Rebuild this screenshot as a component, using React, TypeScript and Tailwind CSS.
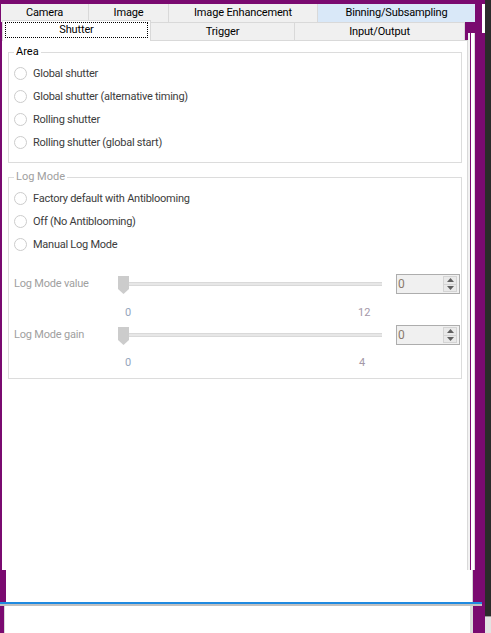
import React from "react";

function Radio({ label }: { label: string }) {
  return (
    <div className="flex items-center h-[23px]">
      <span className="w-[13px] h-[13px] rounded-full border border-[#cccccc] bg-white shrink-0" />
      <span className="ml-[6px] text-[#3c3c3c] tracking-[-0.25px]">{label}</span>
    </div>
  );
}

function Slider() {
  return (
    <div className="relative w-[264px] h-[20px] flex items-center pl-[4px]">
      <div className="w-full h-[4px] bg-[#e7e7e7] border-y border-[#d9d9d9]" />
      <svg width="11" height="18" viewBox="0 0 11 18" className="absolute left-0 top-[2px]">
        <path d="M0 0H11V13L5.5 18L0 13Z" fill="#cccccc" />
      </svg>
    </div>
  );
}

function Spinner() {
  return (
    <div className="w-[64px] h-[20px] border border-[#adadad] bg-[#f0f0f0] flex items-center pl-[1px] pr-[2px]">
      <span className="flex-1 text-[12px] leading-none text-[#8a7a6c]">0</span>
      <div className="w-[14px] h-[16px] flex flex-col">
        <div className="flex-1 border border-[#d4d4d4] bg-[#e9e9e9] flex items-center justify-center">
          <svg width="7" height="4" viewBox="0 0 7 4">
            <path d="M0 4L3.5 0L7 4Z" fill="#606060" />
          </svg>
        </div>
        <div className="flex-1 border border-t-0 border-[#d4d4d4] bg-[#e9e9e9] flex items-center justify-center">
          <svg width="7" height="4" viewBox="0 0 7 4">
            <path d="M0 0L3.5 4L7 0Z" fill="#606060" />
          </svg>
        </div>
      </div>
    </div>
  );
}

function SliderRow({ label }: { label: string }) {
  return (
    <div className="flex items-center h-[20px]">
      <span className="w-[104px] text-[#a0a0a0] tracking-[-0.2px]">{label}</span>
      <Slider />
      <div className="ml-[14px]">
        <Spinner />
      </div>
    </div>
  );
}

export default function App() {
  return (
    <div className="w-[491px] h-[633px] bg-[#7a0a70] flex overflow-hidden relative font-['Roboto',sans-serif] text-[11px] leading-[14px]">
      <div className="w-[485px] flex flex-col">
        <div className="h-[4px]" />
        {/* Tab row 1 */}
        <div className="flex h-[18px] ml-[1px] text-black tracking-[-0.15px]">
          <div className="w-[88px] bg-[#f0f0f0] border-r border-[#d9d9d9] flex items-center justify-center">Camera</div>
          <div className="w-[80px] bg-[#f0f0f0] border-r border-[#d9d9d9] flex items-center justify-center">Image</div>
          <div className="w-[149px] bg-[#f0f0f0] border-r border-[#d9d9d9] flex items-center justify-center">Image Enhancement</div>
          <div className="w-[157px] bg-[#d9e8f8] flex items-center justify-center">Binning/Subsampling</div>
        </div>
        <div className="flex h-[548px]">
          <div className="ml-[2px] w-[466px] flex flex-col">
            {/* Tab row 2 */}
            <div className="flex h-[18px] items-end text-black tracking-[-0.15px]">
              <div className="relative z-10 w-[149px] h-[21px] -mb-px bg-white border-x border-t border-[#d9d9d9] flex flex-col px-[2px] pt-[1px] pb-[3px]">
                <div className="flex-1 border border-dotted border-black flex items-center justify-center">Shutter</div>
              </div>
              <div className="w-[144px] h-[18px] bg-[#f0f0f0] border-t border-r border-[#d9d9d9] flex items-center justify-center">Trigger</div>
              <div className="w-[170px] h-[18px] bg-[#f0f0f0] border-t border-r border-[#d9d9d9] flex items-center justify-center">Input/Output</div>
            </div>
            {/* Page */}
            <div className="h-[530px] bg-white border-t border-r border-[#d9d9d9] px-[6px]">
              <fieldset className="mt-[4px] w-[454px] border border-[#dcdcdc] pl-[5px] pt-[3px] pb-[8px]">
                <legend className="px-[2px] leading-[14px] text-black">Area</legend>
                <Radio label="Global shutter" />
                <Radio label="Global shutter (alternative timing)" />
                <Radio label="Rolling shutter" />
                <Radio label="Rolling shutter (global start)" />
              </fieldset>
              <fieldset className="mt-[7px] w-[454px] border border-[#dcdcdc] pl-[5px] pt-[3px] pb-[8px]">
                <legend className="px-[2px] leading-[14px] text-[#a0a0a0]">Log Mode</legend>
                <Radio label="Factory default with Antiblooming" />
                <Radio label="Off (No Antiblooming)" />
                <Radio label="Manual Log Mode" />
                <div className="mt-[18px]">
                  <SliderRow label="Log Mode value" />
                </div>
                <div className="mt-[12px] h-[14px] flex pl-[111px]">
                  <span className="w-[233px] text-[#95a5bd]">0</span>
                  <span className="text-[#a498a8]">12</span>
                </div>
                <div className="mt-[5px]">
                  <SliderRow label="Log Mode gain" />
                </div>
                <div className="mt-[11px] h-[14px] flex pl-[111px]">
                  <span className="w-[234px] text-[#95a5bd]">0</span>
                  <span className="text-[#a498a8]">4</span>
                </div>
              </fieldset>
            </div>
          </div>
          {/* right edge stripe */}
          <div className="w-[7px] flex flex-col pt-[11px]">
            <div className="flex-1 flex">
              <div className="w-[2px] bg-[#f2f2f2]" />
              <div className="w-[1px]" />
              <div className="w-[3px] bg-white" />
              <div className="w-[1px] bg-[#dcdcdc]" />
            </div>
          </div>
        </div>
        {/* Row B */}
        <div className="flex h-[32px]">
          <div className="w-[6px]" />
          <div className="w-[466px] bg-white" />
          <div className="w-[1px] bg-[#d4d4d4]" />
        </div>
        <div className="w-[482px] h-[2px] bg-[#1f8ae0]" />
        <div className="w-[482px] h-[2px] bg-[#c0c0c0]" />
        {/* Row C */}
        <div className="flex flex-1">
          <div className="w-[4px]" />
          <div className="w-[1px] bg-[#d9d9d9]" />
          <div className="w-[465px] bg-white" />
          <div className="w-[3px] bg-[#dcdcdc]" />
        </div>
      </div>
      {/* dark right strip */}
      <div className="w-[6px] flex flex-col">
        <div className="h-[616px] bg-[#2b2b2b]" />
        <div className="flex-1 bg-[#e3e3e3] border-t border-[#9a9a9a]" />
      </div>
      <div className="absolute left-[482px] top-[4px] w-[3px] h-[29px] bg-white" />
    </div>
  );
}
